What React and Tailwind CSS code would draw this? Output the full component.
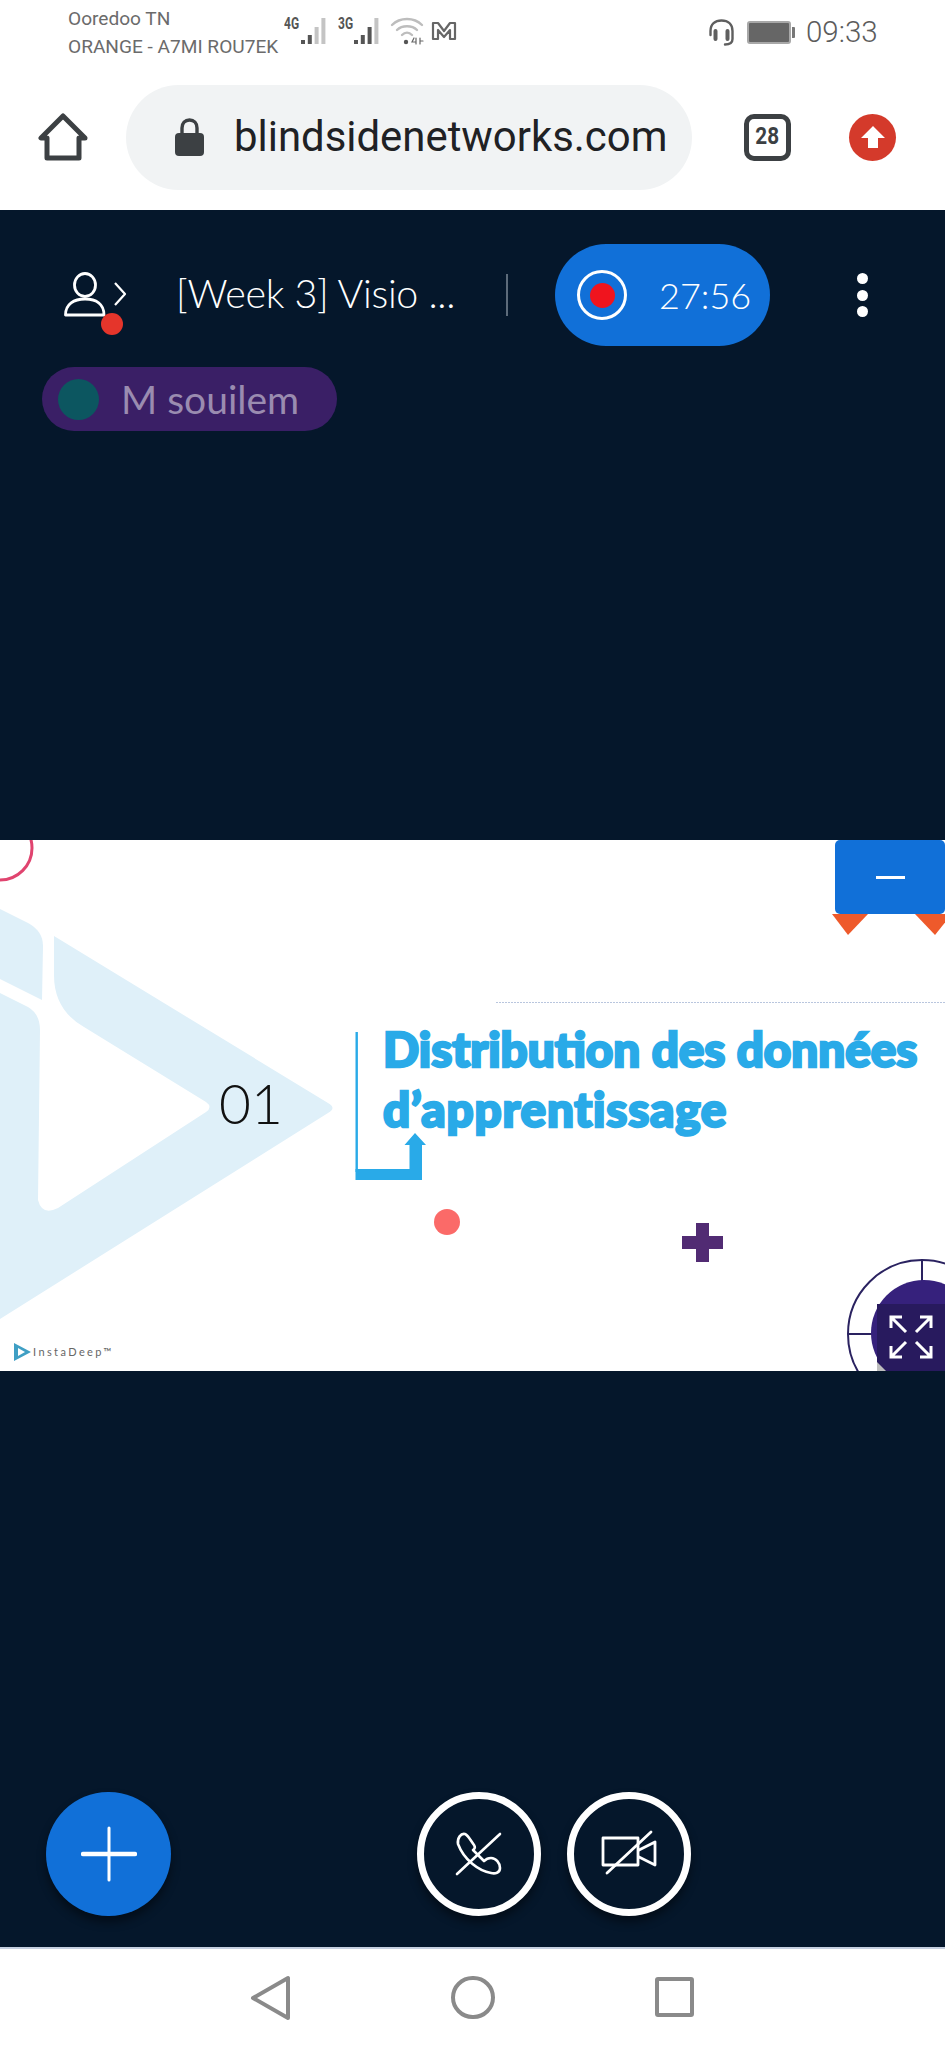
import React from "react";

const roboto = { fontFamily: '"Roboto", "Liberation Sans", sans-serif' };

function Bars({ dim }) {
  const h = [4, 9, 17, 26];
  return (
    <svg width="28" height="28" viewBox="0 0 28 28">
      {h.map((v, i) => (
        <rect key={i} x={1 + i * 6.8} y={27 - v} width="4" height={v} fill={i >= dim ? "#c4c4c4" : "#555"} />
      ))}
    </svg>
  );
}

function StatusBar() {
  return (
    <div className="h-[64px] flex items-start bg-white text-[#6b6b6b] font-['Roboto',sans-serif]">
      <div className="ml-[68px] w-[216px] pt-[5px] text-[19.1px] leading-[28px] whitespace-nowrap">
        <div>Ooredoo TN</div>
        <div>ORANGE - A7MI ROU7EK</div>
      </div>
      <div className="flex items-start pt-[17px]">
        <span className="w-[16px] text-[16px] font-bold leading-[14px] scale-x-75 origin-left text-[#555]">4G</span>
        <span><Bars dim={2} /></span>
        <span className="ml-[10px] w-[15px] text-[16px] font-bold leading-[14px] scale-x-75 origin-left text-[#555]">3G</span>
        <span><Bars dim={3} /></span>
        <svg className="ml-[9px]" width="34" height="28" viewBox="0 0 34 28" fill="none" strokeLinecap="round">
          <path d="M2 8 C10 0 24 0 32 8" stroke="#bdbdbd" strokeWidth="2.4" />
          <path d="M7 13 C12 8 22 8 27 13" stroke="#bdbdbd" strokeWidth="2.4" />
          <path d="M12 18 C15 15 19 15 22 18" stroke="#bdbdbd" strokeWidth="2.4" />
          <circle cx="16" cy="25" r="2.2" fill="#555" />
          <path d="M24 21 L22 25 H26 M26 21 V27 M30 21 V27 M30 24 H33" stroke="#666" strokeWidth="1.2" />
        </svg>
        <svg className="ml-[7px] mt-[4px]" width="26" height="20" viewBox="0 0 26 20" fill="none" stroke="#666" strokeWidth="2.2" strokeLinejoin="round">
          <path d="M2 2 H7 L13 10 L19 2 H24 V18 H19 V9 L13 16 L7 9 V18 H2 Z" />
        </svg>
      </div>
      <div className="ml-auto mr-[66px] flex items-center pt-[18px]">
        <svg width="27" height="27" viewBox="0 0 27 27" fill="none" stroke="#5f5f5f" strokeWidth="2.4" strokeLinecap="round">
          <path d="M2.5 16 V12 C2.5 5 7 1.5 13.5 1.5 C20 1.5 24.5 5 24.5 12 V20 C24.5 23.5 21.5 25.5 17 25.5" />
          <path d="M7.5 12 V20 M19.5 12 V20" strokeWidth="4" />
        </svg>
        <div className="ml-[12px] flex items-center">
          <div className="w-[44px] h-[23px] border-2 border-[#a8a8a8] rounded-[3px] bg-[#666]" />
          <div className="w-[3px] h-[11px] bg-[#777] ml-[1px] rounded-r-[1px]" />
        </div>
        <span className="ml-[11px] text-[29.5px] leading-[28px] font-light text-[#5c5c5c] w-[73px] whitespace-nowrap">09:33</span>
      </div>
    </div>
  );
}

function Chrome() {
  return (
    <div className="h-[146px] flex items-center bg-white">
      <svg className="ml-[38px]" width="50" height="48" viewBox="0 0 50 48" fill="none" stroke="#3c4043" strokeWidth="5" strokeLinejoin="round">
        <path d="M25 3 L3 25 H9 V45 H41 V25 H47 Z" />
      </svg>
      <div className="ml-[38px] w-[566px] h-[105px] rounded-full bg-[#f1f3f4] flex items-center pl-[49px]">
        <svg width="29" height="38" viewBox="0 0 29 38">
          <path d="M7 17 V10 C7 5 10 2 14.5 2 C19 2 22 5 22 10 V17" fill="none" stroke="#3c4043" strokeWidth="3.4" />
          <rect x="0" y="15" width="29" height="23" rx="4" fill="#3c4043" />
        </svg>
        <span className="ml-[30px] text-[41.9px] leading-none text-[#202124] whitespace-nowrap font-['Roboto',sans-serif]">blindsidenetworks.com</span>
      </div>
      <div className="ml-[52px] w-[47px] h-[47px] rounded-[10px] border-[5px] border-[#3c4043] flex items-center justify-center">
        <span className="text-[23px] font-bold text-[#3c4043] scale-x-90 font-['Roboto',sans-serif]">28</span>
      </div>
      <div className="ml-[58px] w-[47px] h-[47px] rounded-full bg-[#d43a2b] flex items-center justify-center">
        <svg width="26" height="26" viewBox="0 0 26 26" fill="#fff">
          <path d="M13 2 L25 14 H18 V24 H8 V14 H1 Z" />
        </svg>
      </div>
    </div>
  );
}

function TopBar() {
  return (
    <div className="pt-[34px]">
      <div className="h-[102px] flex items-center text-white font-['Lato',sans-serif]">
        <div className="relative ml-[64px] w-[62px] h-[44px] -mt-[3px]">
          <svg width="64" height="46" viewBox="0 0 64 46" fill="none" stroke="#fff" strokeWidth="2.8" strokeLinejoin="round">
            <ellipse cx="21" cy="13" rx="10.5" ry="11.5" />
            <path d="M1.5 43 C1.5 32 10 27 21 27 C32 27 40 32 40 43 Z" />
            <path d="M51 11 L61 22 L51 33" strokeWidth="2.2" />
          </svg>
          <div className="absolute left-[37px] top-[41px] w-[22px] h-[22px] rounded-full bg-[#e5352b]" />
        </div>
        <span className="ml-[50px] w-[277px] -mt-[4px] text-[39.4px] font-light whitespace-nowrap tracking-[-0.3px]">[Week 3] Visio ...</span>
        <div className="ml-[53px] w-[2px] h-[42px] bg-[#5d6b7a]" />
        <div className="ml-[47px] w-[215px] h-[102px] rounded-full bg-[#1170d8] flex items-center pl-[22px]">
          <div className="w-[50px] h-[50px] rounded-full border-[3px] border-white flex items-center justify-center">
            <div className="w-[25px] h-[25px] rounded-full bg-[#f0141e]" />
          </div>
          <span className="ml-[32px] text-[36px] font-light leading-none">27:56</span>
        </div>
        <div className="ml-[87px] flex flex-col gap-[5.5px]">
          <div className="w-[11px] h-[11px] rounded-full bg-white" />
          <div className="w-[11px] h-[11px] rounded-full bg-white" />
          <div className="w-[11px] h-[11px] rounded-full bg-white" />
        </div>
      </div>
      <div className="mt-[21px] ml-[42px] w-[295px] h-[64px] rounded-full bg-[#3a1f66] flex items-center pl-[16px]">
        <div className="w-[41px] h-[41px] rounded-full bg-[#0c5660]" />
        <span className="ml-[22px] text-[39px] leading-none text-[#9a8cb0] whitespace-nowrap font-['Lato',sans-serif]">M souilem</span>
      </div>
    </div>
  );
}

function Slide() {
  return (
    <div className="relative mt-[409px] h-[531px] bg-white overflow-hidden">
      <svg className="absolute inset-0" width="945" height="531" viewBox="0 840 945 531" fill="none">
        <circle cx="0" cy="848" r="32" stroke="#e0446f" strokeWidth="3" />
        <path fill="#dff0f9" d="M0 909 L28 923 Q43 931 43 946 L42 1000 L0 979 Z" />
        <path fill="#dff0f9" d="M54 936 L328 1103 Q337 1108 328 1113 L0 1319 V993 L28 1007 Q40 1014 40 1030 L38 1200 Q42 1216 58 1208 L206 1112 Q213 1107 206 1102 L84 1027 Q54 1010 54 975 Z" />
        <rect x="355.5" y="1032" width="2.4" height="140" fill="#29aae8" />
        <path fill="#29aae8" d="M355.5 1169 H409.5 V1145 H404.5 L415 1133 L426 1145 H422 V1180 H355.5 Z" />
        <line x1="496" y1="1002.5" x2="945" y2="1002.5" stroke="#b9c6de" strokeWidth="1" strokeDasharray="2 1" />
        <circle cx="447" cy="1222" r="13" fill="#fb6a68" />
        <path fill="#512b73" d="M696 1223 H709 V1236 H723 V1249 H709 V1262 H696 V1249 H682 V1236 H696 Z" />
        <circle cx="922" cy="1334" r="74" stroke="#2a2260" strokeWidth="2" />
        <line x1="922" y1="1260" x2="922" y2="1285" stroke="#2a2260" strokeWidth="2" />
        <line x1="848" y1="1334" x2="875" y2="1334" stroke="#2a2260" strokeWidth="2" />
        <circle cx="924" cy="1333" r="53" fill="#36217c" />
        <path fill="#ee5a2b" d="M832 914 L848 935 L868 914 Z" />
        <path fill="#ee5a2b" d="M915 914 L935 935 L947 920 V914 Z" />
        <path fill="#3f9fc4" d="M14 1343 L31 1352 L14 1361 Z M18 1348 V1356 L25 1352 Z" fillRule="evenodd" />
      </svg>
      <span className="absolute left-[219px] top-[233px] text-[55px] leading-[60px] font-light text-[#111] font-['Lato',sans-serif]">01</span>
      <div className="absolute left-[383px] top-[179px] text-[47.6px] leading-[60px] font-black text-[#29aae8] whitespace-nowrap font-['Lato',sans-serif] [-webkit-text-stroke:2.5px_#29aae8]">
        <div>Distribution des données</div>
        <div className="tracking-[0.8px]">d’apprentissage</div>
      </div>
      <span className="absolute left-[33px] top-[504px] text-[11px] leading-[16px] tracking-[2.4px] text-[#666] font-['Lato',sans-serif]">InstaDeep™</span>
      <div className="absolute right-0 top-0 w-[110px] h-[74px] bg-[#1170d8] rounded-[5px] flex items-center justify-center">
        <div className="w-[29px] h-[3px] bg-white" />
      </div>
      <div className="absolute left-[877px] bottom-0 w-[68px] h-[67px] bg-[#281a5e] flex items-center justify-center">
        <svg className="absolute left-0 bottom-0" width="9" height="9" viewBox="0 0 9 9">
          <path d="M0 0 L9 9 H0 Z" fill="#bdbdbd" />
        </svg>
        <svg className="-mt-[1px]" width="44" height="44" viewBox="0 0 44 44" fill="none" stroke="#fff" strokeWidth="3">
          <path d="M2 13 V2 H13 M2 2 L17 17" />
          <path d="M42 13 V2 H31 M42 2 L27 17" />
          <path d="M2 31 V42 H13 M2 42 L17 27" />
          <path d="M42 31 V42 H31 M42 42 L27 27" />
        </svg>
      </div>
    </div>
  );
}

function Controls() {
  return (
    <div className="mt-[421px] pb-[31px] flex items-start pl-[46px]">
      <div className="w-[125px] h-[124px] rounded-full bg-[#1170d8] shadow-[0_6px_10px_rgba(0,0,0,0.45)] flex items-center justify-center">
        <svg width="56" height="56" viewBox="0 0 56 56" stroke="#fff" strokeLinecap="round">
          <path d="M28 2 V54" strokeWidth="3" />
          <path d="M2 28 H54" strokeWidth="4.5" />
        </svg>
      </div>
      <div className="ml-[246px] w-[124px] h-[124px] rounded-full border-[7px] border-white shadow-[0_6px_10px_rgba(0,0,0,0.45)] flex items-center justify-center">
        <svg width="48" height="48" viewBox="0 0 48 48" fill="none" stroke="#fff" strokeWidth="2.6" strokeLinecap="round" strokeLinejoin="round">
          <path d="M45 4 L2 44" />
          <path d="M3 14 C2 8 6 3 10 4 C13 5 16 11 19 15 Q21 18 18 20 L29 31 Q32 28 36 28 C41 28 45 33 45 38 C45 43 40 44 36 43 C24 41 9 30 3 14 Z" />
        </svg>
      </div>
      <div className="ml-[26px] w-[124px] h-[124px] rounded-full border-[7px] border-white shadow-[0_6px_10px_rgba(0,0,0,0.45)] flex items-center justify-center">
        <svg width="56" height="48" viewBox="0 0 56 48" fill="none" stroke="#fff" strokeWidth="2.8" strokeLinejoin="round" strokeLinecap="round">
          <path d="M2 8 H37 V35 H2 Z" />
          <path d="M38 20 L54 12 V35 L38 27" />
          <path d="M50 2 L6 43" />
        </svg>
      </div>
    </div>
  );
}

function NavBar() {
  return (
    <div className="relative h-[101px] bg-white border-t-2 border-[#c5cfe0] flex items-start">
      <svg className="ml-[250px] mt-[26px]" width="42" height="46" viewBox="0 0 42 46" fill="none" stroke="#8a8a8a" strokeWidth="4" strokeLinejoin="round">
        <path d="M38 3 V43 L3 23 Z" />
      </svg>
      <div className="ml-[159px] mt-[27px] w-[44px] h-[43px] rounded-full border-4 border-[#8a8a8a]" />
      <div className="ml-[160px] mt-[28px] w-[39px] h-[40px] rounded-[3px] border-4 border-[#8a8a8a]" />
    </div>
  );
}

export default function App() {
  return (
    <div className="w-[945px] h-[2048px] overflow-hidden bg-white flex flex-col" style={roboto}>
      <StatusBar />
      <Chrome />
      <div className="flex-1 bg-[#05172b]">
        <TopBar />
        <Slide />
        <Controls />
      </div>
      <NavBar />
    </div>
  );
}
